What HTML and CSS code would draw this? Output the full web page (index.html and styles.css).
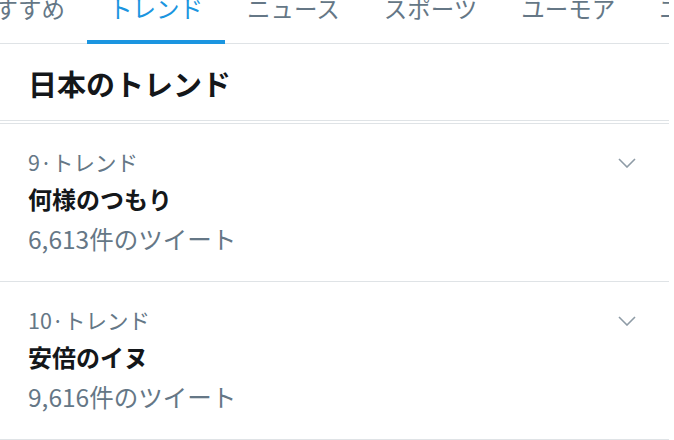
FILE: index.html
```html
<!DOCTYPE html>
<html lang="ja">
<head>
  <meta charset="UTF-8" />
  <title>日本のトレンド</title>
  <meta name="viewport" content="width=device-width, initial-scale=1.0" />
  <link rel="stylesheet" href="styles.css">
</head>
<body>
  <div class="page">
    <nav class="tabs">
      <div class="tab">おすすめ</div>
      <div class="tab active">トレンド</div>
      <div class="tab">ニュース</div>
      <div class="tab">スポーツ</div>
      <div class="tab">ユーモア</div>
      <div class="tab">エンタメ</div>
    </nav>

    <div class="heading">
      <h2>日本のトレンド</h2>
    </div>

    <ul class="trends">
      <li class="trend">
        <div class="meta">9·トレンド</div>
        <div class="name">何様のつもり</div>
        <div class="count">6,613件のツイート</div>
        <svg class="chevron" viewBox="0 0 18 10" width="18" height="10">
          <path d="M1 1 L9 9 L17 1" fill="none" stroke="#8e9ba6" stroke-width="1.6" />
        </svg>
      </li>
      <li class="trend">
        <div class="meta">10·トレンド</div>
        <div class="name">安倍のイヌ</div>
        <div class="count">9,616件のツイート</div>
        <svg class="chevron" viewBox="0 0 18 10" width="18" height="10">
          <path d="M1 1 L9 9 L17 1" fill="none" stroke="#8e9ba6" stroke-width="1.6" />
        </svg>
      </li>
    </ul>
  </div>
</body>
</html>
```

FILE: styles.css
```css
:root {
  --blue: #1b95e0;
  --gray: #657786;
  --line: #dfe3e6;
  --text: #14171a;
}

body {
  margin: 0;
  background: #fff;
  font-family: "Noto Sans CJK JP", "Noto Sans", sans-serif;
  color: var(--text);
  overflow: hidden;
}

.page {
  width: 669px;
  overflow: hidden;
}

.tabs {
  display: flex;
  height: 44px;
  border-bottom: 1px solid var(--line);
  margin-left: -51px;
  box-sizing: border-box;
}

.tab {
  flex: none;
  padding: 0 22px;
  font-size: 23.5px;
  line-height: 24px;
  margin-top: -4px;
  color: var(--gray);
  white-space: nowrap;
  box-sizing: border-box;
  height: 48px;
}

.tab.active {
  color: var(--blue);
  border-bottom: 4px solid var(--blue);
}

.heading {
  height: 76px;
  display: flex;
  align-items: center;
  padding: 0 28px;
  border-bottom: 1px solid var(--line);
}

.heading h2 {
  margin: 0;
  font-size: 29px;
  font-weight: 700;
  line-height: 36px;
  margin-top: 2px;
}

.trends {
  list-style: none;
  margin: 2px 0 0;
  padding: 0;
  border-top: 1px solid var(--line);
}

.trend {
  position: relative;
  padding: 24px 28px 25px;
  border-bottom: 1px solid var(--line);
}

.meta {
  font-size: 21.5px;
  line-height: 28px;
  color: var(--gray);
}

.name {
  font-size: 24px;
  font-weight: 700;
  line-height: 46px;
}

.count {
  font-size: 24.5px;
  line-height: 34px;
  color: var(--gray);
}

.chevron {
  position: absolute;
  top: 34px;
  right: 33px;
}
```
